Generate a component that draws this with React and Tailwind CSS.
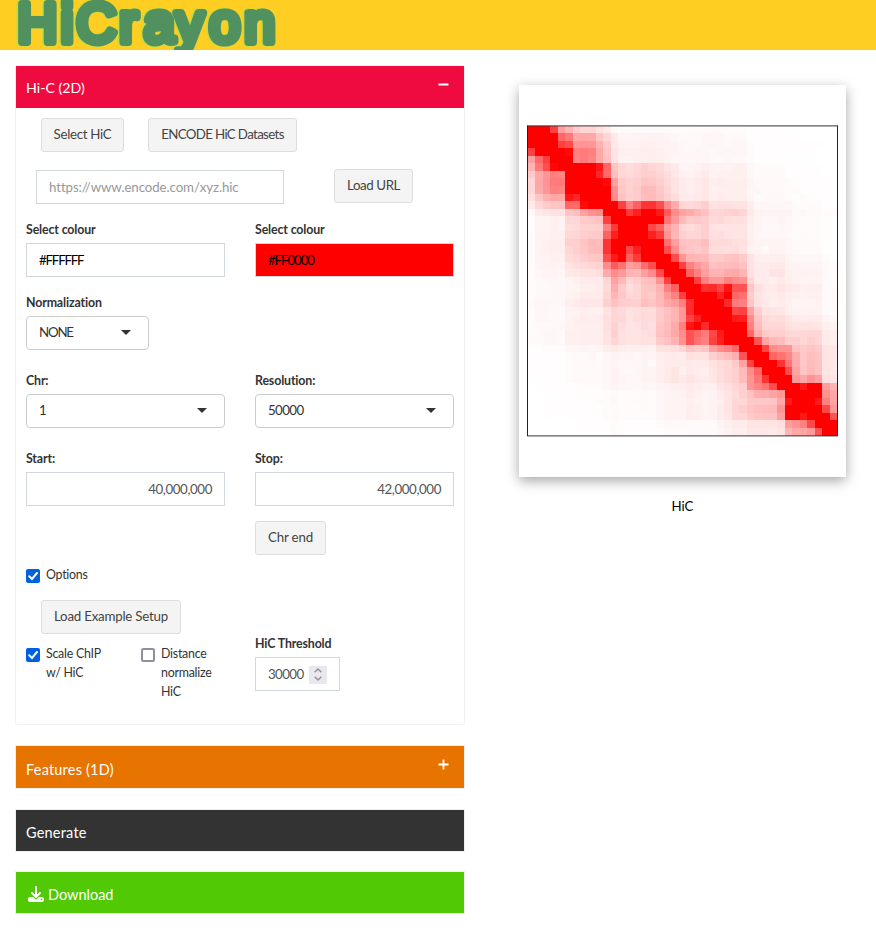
import React from "react";
import { FaDownload } from "react-icons/fa6";

// Upper triangle of the symmetric contact matrix (percent of full red), one row per bin,
// starting at the diagonal.
const CONTACTS = [
  "100 100 100 75 38 30 22 18 18 14 10 3 2 2 2 2 2 2 2 2 2 2 2 3 2 2 2 2 2 1 1 1 1 0 0 0 0 0 0 0 0",
  "100 100 100 60 53 34 35 34 24 18 10 5 5 6 6 6 6 5 4 3 3 3 4 4 4 3 3 3 1 1 1 1 1 1 0 0 0 0 0 0",
  "100 100 75 70 41 42 41 31 22 11 6 6 6 7 7 6 6 5 4 3 3 4 4 4 3 4 4 2 1 1 1 1 1 1 1 1 1 0 0",
  "100 100 97 50 52 50 35 24 13 7 7 7 8 8 7 6 5 4 4 4 4 3 4 4 4 4 2 1 1 1 1 1 0 0 1 0 0 0",
  "100 100 48 52 48 34 25 13 6 6 7 8 8 7 6 4 4 4 4 4 3 3 4 3 3 2 1 1 1 1 1 0 0 0 0 0 0",
  "100 100 100 100 91 60 24 17 15 17 20 18 16 12 10 5 5 6 8 6 6 6 7 7 4 2 2 2 2 1 1 1 1 1 0 0",
  "100 100 100 85 58 26 17 16 18 20 20 18 15 11 7 6 7 10 6 7 7 7 7 4 2 3 2 3 1 1 1 1 1 0 0",
  "100 100 100 96 37 22 19 20 24 23 20 16 13 9 8 10 11 8 9 8 8 8 5 3 3 3 3 2 1 1 1 1 1 1",
  "100 100 100 43 23 19 22 28 27 23 18 13 9 8 9 11 7 8 8 8 8 4 4 3 3 3 2 2 1 1 1 1 1",
  "100 100 45 25 20 22 27 28 24 19 15 9 9 10 11 7 9 8 8 8 5 2 3 3 3 2 1 2 1 1 1 1",
  "100 100 75 50 62 80 80 70 45 33 18 16 18 20 13 14 14 13 13 8 4 4 4 4 4 2 2 2 2 1 1",
  "100 100 78 88 100 100 90 65 45 37 33 29 25 18 18 19 20 18 10 6 5 6 6 5 3 4 3 3 2 2",
  "100 100 100 100 100 100 55 40 28 22 23 21 16 17 15 14 14 8 5 4 4 5 4 2 2 2 2 1 1",
  "100 100 100 72 62 38 30 18 15 17 20 13 12 12 12 12 7 5 4 3 4 4 2 2 2 2 1 1",
  "100 100 88 78 42 29 20 18 18 20 14 15 13 12 12 7 4 4 4 4 3 2 3 2 2 1 1",
  "100 100 100 57 38 25 24 24 26 16 16 16 14 14 8 5 5 5 5 4 3 3 3 2 1 1",
  "100 100 70 45 26 24 22 24 15 15 14 15 13 6 5 3 5 5 4 2 2 2 2 1 1",
  "100 100 70 42 30 29 28 22 22 24 25 22 13 8 7 8 8 5 4 4 4 4 2 1",
  "100 100 75 50 40 35 25 26 27 28 25 13 9 9 10 10 6 5 5 5 5 3 2",
  "100 100 62 50 38 30 30 33 34 30 14 10 9 12 12 7 6 6 6 6 3 2",
  "100 100 75 50 40 40 50 45 43 18 9 9 7 10 8 6 5 5 5 3 2",
  "100 100 82 83 74 92 68 68 24 14 10 10 12 9 9 7 8 8 3 3",
  "100 100 100 87 100 60 56 22 13 9 9 10 8 7 6 7 7 3 3",
  "100 100 100 83 52 50 24 13 10 8 9 7 5 5 5 6 3 3",
  "100 100 100 72 75 37 20 13 12 11 7 6 6 6 6 3 3",
  "100 100 90 88 45 24 16 15 15 12 9 8 9 9 5 4",
  "100 100 100 50 27 17 17 17 14 12 12 12 11 7 6",
  "100 100 60 32 22 20 20 18 16 17 18 17 9 8",
  "100 100 68 36 28 27 20 20 17 20 17 9 8",
  "100 100 74 45 42 42 25 22 24 22 12 11",
  "100 100 60 55 48 32 23 26 24 12 11",
  "100 100 80 55 33 23 27 25 12 11",
  "100 100 70 36 24 28 25 12 10",
  "100 100 40 35 42 37 14 12",
  "100 100 90 100 100 38 30",
  "100 100 100 100 43 35",
  "100 100 90 50 36",
  "100 100 72 40",
  "100 100 68",
  "100 100",
  "100",
].map((row) => row.split(" ").map(Number));

const BINS = 41;
const CELL = 310 / BINS;

function ContactMap() {
  const cells = [];
  for (let y = 0; y < BINS; y++) {
    for (let x = 0; x < BINS; x++) {
      const low = Math.min(x, y);
      const raw = CONTACTS[low][Math.abs(x - y)] ?? 0;
      if (!raw) continue;
      const v = raw * (0.8 + 0.2 * Math.min(raw / 30, 1));
      const c = Math.round(255 * (1 - v / 100));
      const left = Math.floor(x * CELL);
      const top = Math.floor(y * CELL);
      cells.push(
        <rect
          key={`${x}-${y}`}
          x={left + 1}
          y={top + 1}
          width={Math.floor((x + 1) * CELL) - left}
          height={Math.floor((y + 1) * CELL) - top}
          fill={`rgb(255,${c},${c})`}
        />
      );
    }
  }
  return (
    <svg width="312" height="312">
      <g shapeRendering="crispEdges">{cells}</g>
      <path d="M.5 .5V311M310.5 .5V311" stroke="#222" />
      <path d="M0 .9H311M0 310.9H311" stroke="#333" />
    </svg>
  );
}

function Logo() {
  const common = {
    fontSize: 55,
    fontFamily: "Liberation Sans, sans-serif",
    strokeLinejoin: "round",
  };
  return (
    <svg width="300" height="50" className="block overflow-hidden">
      <text {...common} x="16.5 60 75.5 118.5 143 175 208.5 243.5" y="42.2" fill="#bfdc42" stroke="#bfdc42" strokeWidth="9">HiCrayon</text>
      <text {...common} x="17.5 61 76.5 119.5 144 176 209.5 244.5" y="41.5" fill="#51915f" stroke="#51915f" strokeWidth="7.8">HiCrayon</text>
    </svg>
  );
}

const Button = ({ children, className = "" }) => (
  <button className={`h-[34px] shrink-0 whitespace-nowrap rounded-[3px] border border-[#ddd] bg-[#f4f4f4] text-center text-[13.3px] text-[#444] ${className}`}>
    {children}
  </button>
);

const Field = ({ label, children, className = "w-[199px]" }) => (
  <div className={className}>
    <div className="h-6 whitespace-nowrap pt-px text-[12.4px] font-bold leading-5 tracking-[-0.15px] text-[#333]">{label}</div>
    {children}
  </div>
);

const Box = ({ children, className = "" }) => (
  <div className={`flex h-[34px] items-center border border-[#d2d6de] px-3 pt-px text-[13.3px] ${className}`}>{children}</div>
);

const Select = ({ children, className = "" }) => (
  <div className={`flex h-[34px] items-center justify-between rounded-[4px] border border-[#ccc] pl-3 pr-[17px] text-[13.3px] text-[#333] ${className}`}>
    {children}
    <svg width="10" height="5" className="-mt-px"><path d="M0 0h10L5 5z" fill="#333" /></svg>
  </div>
);

const Check = ({ checked, children, className = "" }) => (
  <div className={`flex text-[12.4px] leading-[19px] tracking-[-0.25px] text-[#333] ${className}`}>
    <svg width="14" height="14" className="mr-1.5 mt-1 shrink-0">
      {checked ? (
        <>
          <rect width="14" height="14" rx="2" fill="#0060df" />
          <path d="M3.2 7.2l2.8 2.8 5-6" fill="none" stroke="#fff" strokeWidth="2" strokeLinecap="round" />
        </>
      ) : (
        <rect x="1" y="1" width="12" height="12" rx="1.5" fill="#fff" stroke="#8f8f9d" strokeWidth="2" />
      )}
    </svg>
    <span>{children}</span>
  </div>
);

const Bar = ({ children, className = "" }) => (
  <div className={`flex items-center border border-[#ecf0f5] pl-2.5 pr-[15px] pt-[5px] text-[14.5px] text-white ${className}`}>{children}</div>
);

export default function App() {
  return (
    <div className="h-[947px] w-[876px] overflow-hidden bg-white font-['Lato',sans-serif]">
      <header className="h-[50px] bg-[#ffce22]"><Logo /></header>
      <main className="flex pl-[15px] pt-[15px]">
        <div className="w-[450px]">
          <section className="h-[660px] rounded-[3px] border border-[#ecf0f5]">
            <div className="flex h-[42px] items-center justify-between bg-[#ef0a3f] pl-2.5 pr-[15px] pt-[2px] text-[14.2px] text-white">
              Hi-C (2D)
              <svg width="11" height="11" className="-mt-[8px]"><path d="M.5 5.5h10" stroke="#fff" strokeWidth="2" /></svg>
            </div>
            <div className="px-2.5 pt-2.5">
              <div className="flex gap-6 pl-[15px]">
                <Button className="w-[83px] tracking-[-0.3px]">Select HiC</Button>
                <Button className="w-[149px] tracking-[-0.65px]">ENCODE HiC Datasets</Button>
              </div>
              <div className="mt-[17px] flex gap-[50px] pl-2.5">
                <Box className="mt-px w-[248px] tracking-[-0.1px] text-[#999]">https://www.encode.com/xyz.hic</Box>
                <Button className="w-[79px] tracking-[-0.4px]">Load URL</Button>
              </div>
              <div className="mt-[15px] flex gap-[30px]">
                <Field label="Select colour"><Box className="text-[12px] tracking-[-1.2px] text-black">#FFFFFF</Box></Field>
                <Field label="Select colour"><Box className="bg-[#f00] text-[12px] tracking-[-1.1px] text-black">#FF0000</Box></Field>
              </div>
              <div className="mt-[15px]">
                <Field label="Normalization"><Select className="w-[123px] tracking-[-1.2px]">NONE</Select></Field>
              </div>
              <div className="mt-5 flex gap-[30px]">
                <Field label="Chr:"><Select>1</Select></Field>
                <Field label="Resolution:"><Select className="tracking-[-0.6px]">50000</Select></Field>
              </div>
              <div className="mt-5 flex gap-[30px]">
                <Field label="Start:"><Box className="justify-end tracking-[-0.4px] text-[#555]">40,000,000</Box></Field>
                <Field label="Stop:"><Box className="justify-end tracking-[-0.4px] text-[#555]">42,000,000</Box></Field>
              </div>
              <div className="mt-[15px] pl-[229px]"><Button className="w-[71px] tracking-[-0.15px]">Chr end</Button></div>
              <Check checked className="mt-[10px]">Options</Check>
              <div className="flex">
                <div className="w-[229px] pt-4">
                  <Button className="ml-[15px] w-[140px] tracking-[-0.22px]">Load Example Setup</Button>
                  <div className="mt-[10px] flex">
                    <Check checked className="w-[115px]">Scale ChIP<br />w/ HiC</Check>
                    <Check>Distance<br />normalize<br />HiC</Check>
                  </div>
                </div>
                <Field label="HiC Threshold" className="w-[85px] pt-[49px]">
                  <Box className="justify-between tracking-[-0.6px] text-[#555]">
                    30000
                    <span className="flex h-[18px] w-[18px] items-center justify-center bg-[#e9e9ed]">
                      <svg width="8" height="13" fill="none" stroke="#8f8f9d" strokeWidth="1.4"><path d="M.7 4.2L4 1l3.3 3.2M.7 8.8L4 12l3.3-3.2" /></svg>
                    </span>
                  </Box>
                </Field>
              </div>
            </div>
          </section>
          <Bar className="mt-5 h-11 justify-between bg-[#e87400] tracking-[0.2px]">
            Features (1D)
            <svg width="11" height="11" className="-mt-[10px]"><path d="M.5 5.5h10M5.5 .5v10" stroke="#fff" strokeWidth="1.8" /></svg>
          </Bar>
          <Bar className="mt-5 h-[43px] bg-[#333] tracking-[0.2px]">Generate</Bar>
          <Bar className="mt-[19px] h-[43px] bg-[#51c904]">
            <FaDownload className="-mt-[3px] ml-0.5 mr-1 h-4 w-4" />Download
          </Bar>
        </div>
        <div className="ml-[54px] mt-5 w-[327px]">
          <div className="h-[392px] bg-white pl-2 pt-10 shadow-[0_4px_12px_rgba(0,0,0,0.35)]"><ContactMap /></div>
          <div className="mt-[19px] text-center text-[13.3px] leading-5 text-black">HiC</div>
        </div>
      </main>
    </div>
  );
}
